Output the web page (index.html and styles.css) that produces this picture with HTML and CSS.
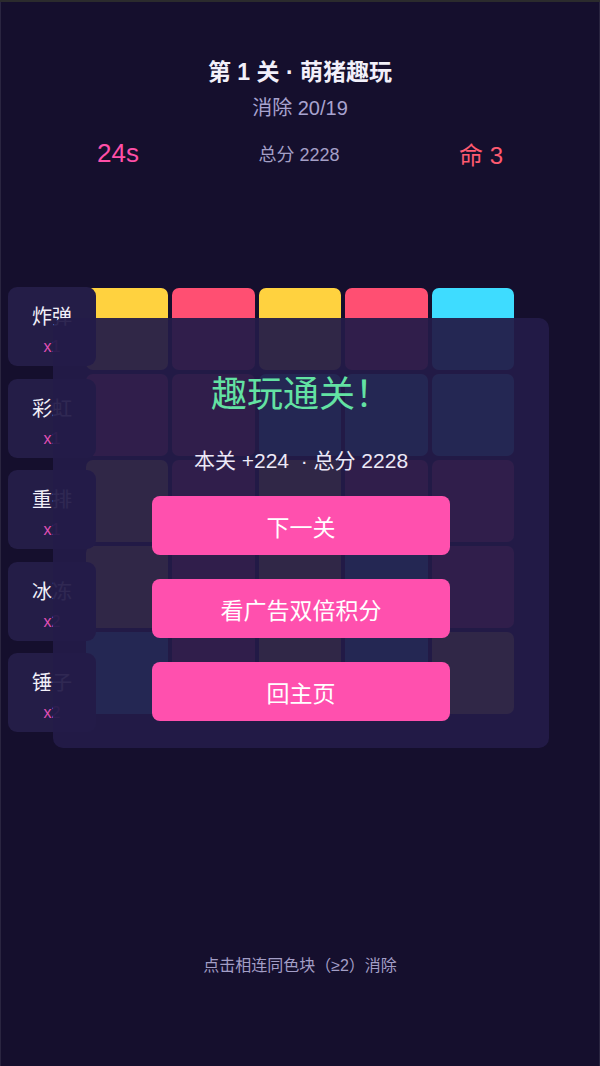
FILE: index.html
```html
<!DOCTYPE html>
<html lang="zh-CN">
<head>
<meta charset="utf-8">
<title>萌猪趣玩</title>
<link rel="stylesheet" href="styles.css">
</head>
<body>
<div class="app">
  <header class="hud">
    <h1 class="title">第 1 关 · 萌猪趣玩</h1>
    <div class="progress">消除 20/19</div>
    <div class="stats">
      <span class="time">24s</span>
      <span class="total">总分 2228</span>
      <span class="lives">命 3</span>
    </div>
  </header>

  <main class="stage">
    <div class="board">
      <div class="tile y"></div><div class="tile r"></div><div class="tile y"></div><div class="tile r"></div><div class="tile c"></div>
      <div class="tile r"></div><div class="tile r"></div><div class="tile c"></div><div class="tile c"></div><div class="tile c"></div>
      <div class="tile y"></div><div class="tile r"></div><div class="tile y"></div><div class="tile r"></div><div class="tile r"></div>
      <div class="tile y"></div><div class="tile r"></div><div class="tile y"></div><div class="tile c"></div><div class="tile r"></div>
      <div class="tile c"></div><div class="tile r"></div><div class="tile y"></div><div class="tile c"></div><div class="tile y"></div>
    </div>

    <aside class="tools">
      <div class="tool"><span class="tool-name">炸弹</span><span class="tool-count">x1</span></div>
      <div class="tool"><span class="tool-name">彩虹</span><span class="tool-count">x1</span></div>
      <div class="tool"><span class="tool-name">重排</span><span class="tool-count">x1</span></div>
      <div class="tool"><span class="tool-name">冰冻</span><span class="tool-count">x2</span></div>
      <div class="tool"><span class="tool-name">锤子</span><span class="tool-count">x2</span></div>
    </aside>

    <section class="modal">
      <h2 class="modal-title">趣玩通关！</h2>
      <p class="modal-info">本关 +224 &nbsp;· 总分 2228</p>
      <div class="actions">
        <button class="btn">下一关</button>
        <button class="btn">看广告双倍积分</button>
        <button class="btn">回主页</button>
      </div>
    </section>
  </main>

  <p class="hint">点击相连同色块（≥2）消除</p>
</div>
</body>
</html>
```

FILE: styles.css
```css
* { box-sizing: border-box; }

html, body {
  margin: 0;
  padding: 0;
  background: #150f2d;
}

body {
  font-family: "Liberation Sans", "Noto Sans CJK SC", sans-serif;
  color: #ffffff;
  border-top: 2px solid #2b2b2d;
}

.app {
  height: 1064px;
  border-left: 1px solid #2a2540;
  border-right: 1px solid #2a2540;
  display: flex;
  flex-direction: column;
}

.hud {
  padding-top: 54px;
  text-align: center;
}

.title {
  margin: 0;
  font-size: 23px;
  line-height: 32px;
  font-weight: 600;
  color: #f2f0fa;
}

.progress {
  margin-top: 7px;
  font-size: 20px;
  line-height: 26px;
  color: #a8a3cf;
}

.stats {
  margin-top: 16px;
  padding: 0 96px;
  display: flex;
  justify-content: space-between;
  align-items: center;
  height: 32px;
}

.time {
  font-size: 26px;
  color: #ff4fa8;
}

.total {
  font-size: 18px;
  color: #a49fc6;
}

.lives {
  font-size: 24px;
  color: #ff5a70;
}

.stage {
  position: relative;
  margin-top: 119px;
}

.board {
  width: 428px;
  margin: 0 auto;
  display: grid;
  grid-template-columns: repeat(5, 1fr);
  grid-auto-rows: 82px;
  gap: 4px;
}

.tile {
  border-radius: 7px;
}
.tile.y { background: #ffd23f; }
.tile.r { background: #ff4f72; }
.tile.c { background: #3edcff; }

.tools {
  position: absolute;
  left: 7px;
  top: -1px;
  display: flex;
  flex-direction: column;
  gap: 12.5px;
}

.tool {
  width: 88px;
  height: 79px;
  border-radius: 9px;
  background: #241d47;
  padding-top: 8px;
  display: flex;
  flex-direction: column;
  align-items: center;
  justify-content: center;
  gap: 9px;
}

.tool-name {
  font-size: 20px;
  line-height: 24px;
  color: #f1eff8;
}

.tool-count {
  font-size: 16px;
  line-height: 18px;
  color: #e04fb4;
}

.modal {
  position: absolute;
  left: 52px;
  top: 30px;
  width: 496px;
  height: 430px;
  border-radius: 10px;
  background: rgba(35, 28, 72, 0.94);
  padding-top: 56px;
  display: flex;
  flex-direction: column;
  align-items: center;
}

.modal-title {
  margin: 0;
  font-size: 36px;
  line-height: 42px;
  font-weight: 400;
  color: #63e2a3;
}

.modal-info {
  margin: 33px 0 0;
  font-size: 21px;
  line-height: 24px;
  color: #ece9f7;
}

.actions {
  margin-top: 23px;
  display: flex;
  flex-direction: column;
  gap: 24px;
}

.btn {
  width: 298px;
  height: 59px;
  border: 0;
  border-radius: 8px;
  background: #ff50ae;
  color: #ffffff;
  font-family: "Liberation Sans", "Noto Sans CJK SC", sans-serif;
  font-size: 23px;
  padding: 0;
}

.hint {
  margin: 242px 0 0;
  text-align: center;
  font-size: 16px;
  line-height: 20px;
  color: #a39ec6;
}
```
